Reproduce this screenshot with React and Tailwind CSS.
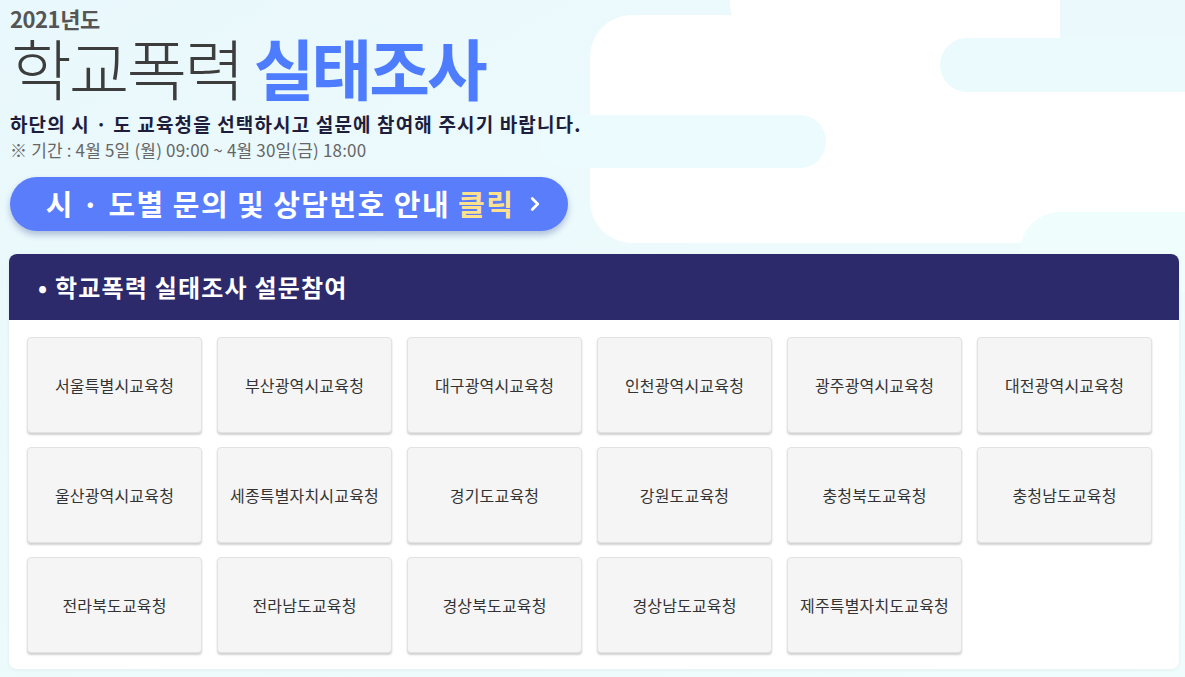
import { ChevronRight } from 'lucide-react'

const offices = [
  '서울특별시교육청', '부산광역시교육청', '대구광역시교육청', '인천광역시교육청', '광주광역시교육청', '대전광역시교육청',
  '울산광역시교육청', '세종특별자치시교육청', '경기도교육청', '강원도교육청', '충청북도교육청', '충청남도교육청',
  '전라북도교육청', '전라남도교육청', '경상북도교육청', '경상남도교육청', '제주특별자치도교육청',
]

function Backdrop() {
  return (
    <svg className="absolute inset-0 w-full h-full" viewBox="0 0 1185 677" preserveAspectRatio="none">
      <defs>
        <linearGradient id="bg" x1="0" y1="0" x2="1" y2="1">
          <stop offset="0" stopColor="#e9f8fc" />
          <stop offset="1" stopColor="#f0fdfd" />
        </linearGradient>
      </defs>
      <rect width="1185" height="677" fill="url(#bg)" />
      <rect x="590" y="15" width="640" height="228" rx="42" fill="#ffffff" />
      <rect x="730" y="-40" width="340" height="80" rx="36" fill="#ffffff" />
      <rect x="540" y="115" width="286" height="53" rx="26" fill="#ecfbfd" />
      <rect x="1060" y="-10" width="140" height="50" fill="#ebf9fc" />
      <rect x="940" y="38" width="300" height="54" rx="27" fill="#ebfafd" />
      <rect x="1020" y="212" width="220" height="80" rx="40" fill="#effdfd" />
    </svg>
  )
}

export default function App() {
  return (
    <div
      className="relative w-[1185px] h-[677px] overflow-hidden"
      style={{ fontFamily: '"Noto Sans CJK KR", "Noto Sans", sans-serif' }}
    >
      <Backdrop />
      <div className="relative px-[10px] pt-[5px]">
        <div className="text-[22px] font-bold text-[#555555] leading-[26px] tracking-[-0.02em]">2021년도</div>
        <h1 className="text-[66px] leading-[70px] tracking-[-0.045em] ml-[1px] whitespace-nowrap">
          <span className="font-light text-[#3d3d3d]">학교폭력 </span>
          <span className="font-bold text-[#4e7cff]">실태조사</span>
        </h1>
        <p className="mt-[11px] text-[19px] font-bold text-[#1e1e3c] leading-[24px] tracking-[0.06em]">
          하단의 시 · 도 교육청을 선택하시고 설문에 참여해 주시기 바랍니다.
        </p>
        <p className="mt-[2px] text-[17px] text-[#666666] leading-[24px] tracking-[0.01em]">
          ※ 기간 : 4월 5일 (월) 09:00 ~ 4월 30일(금) 18:00
        </p>
        <button className="mt-[15px] w-[558px] h-[54px] pl-[14px] rounded-full bg-[#5a7dfc] shadow-[0_4px_6px_rgba(40,60,140,0.3)] flex items-center justify-center gap-[10px] text-white text-[29px] font-bold tracking-[0.05em]">
          <span>
            시 · 도별 문의 및 상담번호 안내 <span className="text-[#ffe08c]">클릭</span>
          </span>
          <ChevronRight className="w-[22px] h-[22px]" strokeWidth={3} />
        </button>

        <div className="mt-[23px] -ml-[1px] w-[1170px] rounded-[8px] bg-white overflow-hidden shadow-[0_1px_4px_rgba(0,0,0,0.06)]">
          <div className="h-[66px] bg-[#2d2a6b] flex items-center pl-[29px]">
            <h2 className="text-[24px] font-bold text-white tracking-[0.05em]">• 학교폭력 실태조사 설문참여</h2>
          </div>
          <div className="pl-[18px] pt-[17px] pb-[16px] grid grid-cols-[repeat(6,175px)] gap-x-[15px] gap-y-[14px]">
            {offices.map((name) => (
              <button
                key={name}
                className="h-[96px] rounded-[4px] bg-[#f5f5f5] border border-[#e2e2e2] shadow-[0_2px_2px_rgba(0,0,0,0.18)] flex items-center justify-center text-[16px] text-[#333333] tracking-[0.01em]"
              >
                {name}
              </button>
            ))}
          </div>
        </div>
      </div>
    </div>
  )
}
